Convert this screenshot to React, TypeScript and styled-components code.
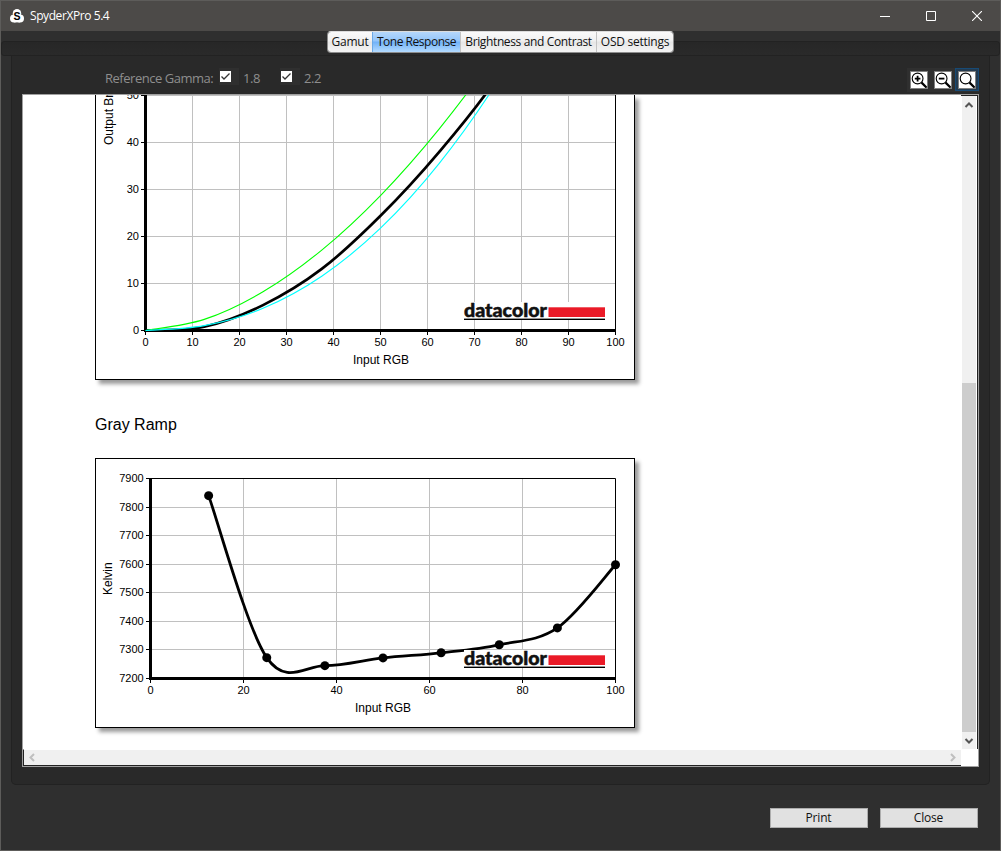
import React from 'react'
import styled, { createGlobalStyle } from 'styled-components'

const GlobalStyle = createGlobalStyle`
  * {
    box-sizing: border-box;
  }
  body {
    margin: 0;
    background: #2f2f2f;
    font-family: 'Open Sans', 'Noto Sans', sans-serif;
  }
`

const Window = styled.div`
  display: flex;
  flex-direction: column;
  width: 1001px;
  height: 851px;
  border: 1px solid #5d5c5a;
  background: #2f2f2f;
  overflow: hidden;
`

const TitleBar = styled.header`
  display: flex;
  align-items: center;
  flex: none;
  height: 30px;
  padding-left: 8px;
  background: #4c4a48;
  color: #fff;
`

const Title = styled.div`
  flex: 1;
  margin-left: 5px;
  font-size: 12px;
  line-height: 16px;
  letter-spacing: -0.42px;
`

const WindowButton = styled.div`
  display: flex;
  align-items: center;
  justify-content: center;
  width: 46px;
  height: 30px;
`

const TabStrip = styled.nav`
  display: flex;
  justify-content: center;
  flex: none;
  height: 15px;
  margin-top: 10px;
  border: 1px solid #222;
  border-radius: 3px;
  background: linear-gradient(#272727, #2a2a2a);
`

const Tabs = styled.div`
  display: flex;
  height: 22px;
  margin-top: -11px;
  border: 1px solid #8d8d8d;
  border-top-color: #dcdcdc;
  border-radius: 4px;
  overflow: hidden;
`

const Tab = styled.div<{ $width: number; $active?: boolean }>`
  flex: none;
  width: ${({ $width }) => $width}px;
  border-left: 1px solid ${({ $active }) => ($active ? '#6ba9e6' : '#c4c4c4')};
  background: ${({ $active }) =>
    $active
      ? 'linear-gradient(#b5d7fb 0%, #93c5fa 45%, #70b2f8 50%, #b4dbff 100%)'
      : 'linear-gradient(#fafafa 0%, #f0f0f0 45%, #e6e6e6 50%, #f4f4f4 100%)'};
  color: #111;
  font-size: 12px;
  line-height: 20px;
  letter-spacing: ${({ $active }) => ($active ? '-0.48px' : '-0.37px')};
  text-align: center;
  white-space: nowrap;

  &:first-child {
    border-left: 0;
    letter-spacing: -0.25px;
  }

  &:last-child {
    letter-spacing: -0.25px;
  }
`

const Panel = styled.main`
  display: flex;
  flex-direction: column;
  flex: none;
  width: 979px;
  height: 729px;
  margin-left: 10px;
  padding: 12px 10px 0;
  border: 1px solid #222;
  border-top: 0;
  border-radius: 0 0 5px 5px;
  background: #292929;
`

const Toolbar = styled.div`
  display: flex;
  height: 26px;
  padding-left: 83px;
  color: #8e8e8e;
  font-size: 13px;
  line-height: 21px;
`

const GammaLabel = styled.div`
  width: 114px;
  letter-spacing: -0.48px;
  white-space: nowrap;
`

const Check = styled.label`
  display: flex;
  width: 61px;
  letter-spacing: -0.4px;
`

const CheckArea = styled.span`
  width: 20px;
  height: 17px;
  margin-right: 4px;
  padding: 3px 0 0 1px;
  background: #2f2f2f;
`

const CheckBox = styled.svg`
  display: block;
  background: #fff;
`

const ZoomGroup = styled.div`
  display: flex;
  height: 24px;
  margin-left: auto;
  background: #2f2f2f;
`

const ZoomButton = styled.div<{ $selected?: boolean }>`
  width: 24px;
  height: 23px;
  padding: 2px;
  border: 1px solid ${({ $selected }) => ($selected ? '#174a75' : 'transparent')};
  background: ${({ $selected }) => ($selected ? '#243b50' : 'transparent')};
`

const ZoomIcon = styled.svg`
  display: block;
  border: 1px solid #808080;
  background: #fff;
`

const Viewer = styled.div`
  display: grid;
  grid-template-columns: 938px 17px;
  grid-template-rows: 654px 17px;
  width: 957px;
  height: 673px;
  border: 1px solid #a0a0a0;
  background: #fff;
`

const Page = styled.div`
  padding-left: 72px;
  overflow: hidden;
`

const Frame = styled.div<{ $cut?: boolean }>`
  width: 540px;
  border: 1px solid #000;
  border-top-width: ${({ $cut }) => ($cut ? 0 : 1)}px;
  background: #fff;
  box-shadow: 4px 4px 4px rgba(0, 0, 0, 0.4);
`

const Plot = styled.svg`
  display: block;
  font-family: 'Liberation Sans', Arial, sans-serif;
  font-size: 11px;
`

const Heading = styled.h2`
  height: 78px;
  margin: 0;
  padding-top: 35px;
  color: #000;
  font: 16px/20px 'Liberation Sans', Arial, sans-serif;
`

const VerticalBar = styled.div`
  display: flex;
  flex-direction: column;
  align-items: center;
  border-top: 1px solid #222;
  border-right: 1px solid #222;
  background: linear-gradient(90deg, #fff 1px, #f0f0f0 1px, #f0f0f0 15px, #fff 15px);
`

const VerticalThumb = styled.div`
  width: 14px;
  height: 349px;
  margin-top: 270px;
  background: #cdcdcd;
`

const HorizontalBar = styled.div`
  display: flex;
  justify-content: space-between;
  align-items: center;
  padding: 0 3px;
  border-top: 1px solid #fff;
  border-bottom: 1px solid #222;
  border-left: 1px solid #222;
  background: #f0f0f0;
`

const Footer = styled.footer`
  display: flex;
  justify-content: flex-end;
  gap: 12px;
  padding: 23px 22px 0 0;
`

const FooterButton = styled.button`
  width: 98px;
  height: 20px;
  padding: 0 1px 0 0;
  border: 1px solid #adadad;
  background: #e1e1e1;
  color: #111;
  font: 12px/18px 'Open Sans', 'Noto Sans', sans-serif;
  letter-spacing: -0.2px;
`

type Point = [number, number]

// cardinal spline through the measured points
const spline = (pts: Point[]) => {
  let d = `M${pts[0][0]} ${pts[0][1]}`
  for (let i = 0; i < pts.length - 1; i++) {
    const a = pts[Math.max(i - 1, 0)]
    const b = pts[i]
    const c = pts[i + 1]
    const e = pts[Math.min(i + 2, pts.length - 1)]
    d += `C${b[0] + (c[0] - a[0]) / 6} ${b[1] + (c[1] - a[1]) / 6} ${c[0] - (e[0] - b[0]) / 6} ${
      c[1] - (e[1] - b[1]) / 6
    } ${c[0]} ${c[1]}`
  }
  return d
}

const STEPS = [0, 12.5, 25, 37.5, 50, 62.5, 75, 87.5, 100]
const MEASURED = [0, 0.8, 5.4, 13.1, 24.4, 38, 54, 75, 100]
const KELVIN = [7840, 7273, 7245, 7272, 7290, 7318, 7377, 7598]

const toneCurve = (values: number[]) =>
  spline(values.map((v, i) => [50.5 + STEPS[i] * 4.7, 235.5 - v * 4.7] as Point))
const gammaCurve = (gamma: number) => toneCurve(STEPS.map((s) => 100 * (s / 100) ** gamma))
const kelvinLine = (n: number) => Math.floor(220.5 - (n * 200) / 7) + 0.5

const Logo: React.FC<{ x: number; y: number }> = ({ x, y }) => (
  <g transform={`translate(${x} ${y})`}>
    <rect width="141" height="18" fill="#fff" />
    <text
      x="0"
      y="15"
      fontFamily="Lato, sans-serif"
      fontWeight="900"
      fontSize="18.5"
      textLength="83"
      lengthAdjust="spacingAndGlyphs"
      fill="#111"
      stroke="#111"
      strokeWidth="0.5"
    >
      datacolor
    </text>
    <rect x="84.5" y="5.3" width="56.5" height="9.7" fill="#ea1a27" />
    <rect y="16.6" width="141" height="1.4" fill="#000" />
  </g>
)

const ToneChart: React.FC = () => {
  const tens = [0, 1, 2, 3, 4, 5, 6, 7, 8, 9, 10]
  return (
    <Plot width="538" height="284" viewBox="1 0 538 284">
      <g stroke="#c0c0c0">
        {tens.slice(1, 10).map((n) => (
          <path key={n} d={`M${50.5 + n * 47} 0V235`} />
        ))}
        {tens.slice(1, 6).map((n) => (
          <path key={n} d={`M51 ${235.5 - n * 47}H520`} />
        ))}
      </g>
      <path d="M520.5 0V240" stroke="#000" />
      <path d="M50.5 0V237M49 235.5H521" stroke="#000" strokeWidth="3" />
      {tens.map((n) => (
        <g key={n}>
          <path d={`M${50.5 + n * 47} 236V240M46 ${235.5 - n * 47}H50`} stroke="#000" />
          <text x={50.5 + n * 47} y="251" textAnchor="middle">
            {n * 10}
          </text>
          {n < 6 && (
            <text x="44" y={239 - n * 47} textAnchor="end">
              {n * 10}
            </text>
          )}
        </g>
      ))}
      <g fill="none">
        <path d={toneCurve(MEASURED)} stroke="#000" strokeWidth="2.7" />
        <path d={gammaCurve(1.8)} stroke="#00ff00" strokeWidth="1.1" />
        <path d={gammaCurve(2.2)} stroke="#00ffff" strokeWidth="1.1" />
      </g>
      <Logo x={369} y={207} />
      <text x="286" y="269" fontSize="12" textAnchor="middle" textLength="56">
        Input RGB
      </text>
      <text transform="translate(18 50) rotate(-90)" fontSize="12">
        Output Brightness
      </text>
    </Plot>
  )
}

const RampChart: React.FC = () => {
  const points = KELVIN.map((k, i) => [55.5 + (i + 1) * 58.125, 220.5 - (k - 7200) / 3.5] as Point)
  return (
    <Plot width="538" height="268" viewBox="1 1 538 268">
      <g stroke="#c0c0c0">
        {[1, 2, 3, 4].map((n) => (
          <path key={n} d={`M${55.5 + n * 93} 21V220`} />
        ))}
        {[1, 2, 3, 4, 5, 6].map((n) => (
          <path key={n} d={`M56 ${kelvinLine(n)}H520`} />
        ))}
      </g>
      <path d="M55 20.5H520.5V225" fill="none" stroke="#000" />
      <path d="M55.5 20V222M54 220.5H521" stroke="#000" strokeWidth="3" />
      {[0, 1, 2, 3, 4, 5, 6, 7].map((n) => (
        <g key={n}>
          <path d={`M51 ${kelvinLine(n)}H55`} stroke="#000" />
          <text x="48.7" y={kelvinLine(n) + 3.5} textAnchor="end">
            {7200 + n * 100}
          </text>
        </g>
      ))}
      {[0, 1, 2, 3, 4, 5].map((n) => (
        <g key={n}>
          <path d={`M${55.5 + n * 93} 221V225`} stroke="#000" />
          <text x={55.5 + n * 93} y="236" textAnchor="middle">
            {n * 20}
          </text>
        </g>
      ))}
      <path d={spline(points)} fill="none" stroke="#000" strokeWidth="2.8" />
      {points.map(([x, y]) => (
        <circle key={x} cx={x} cy={y} r="4.5" />
      ))}
      <Logo x={369} y={192} />
      <text x="288" y="254" fontSize="12" textAnchor="middle" textLength="56">
        Input RGB
      </text>
      <text transform="translate(17 137) rotate(-90)" fontSize="12">
        Kelvin
      </text>
    </Plot>
  )
}

const Magnifier: React.FC<{ sign?: string }> = ({ sign }) => (
  <ZoomIcon width="18" height="18" viewBox="1 1 16 16" fill="none" stroke="#000">
    <circle cx="7.6" cy="7.5" r="5.4" strokeWidth="1.1" />
    <path d="M11.6 11.6L16.6 16.6" strokeWidth="2.2" />
    {sign && <path d={sign} strokeWidth="1.8" />}
  </ZoomIcon>
)

const Arrow: React.FC<{ d: string; color: string }> = ({ d, color }) => (
  <svg width="10" height="17" viewBox="0 0 10 17" fill="none" stroke={color} strokeWidth="2">
    <path d={d} />
  </svg>
)

const GammaCheck: React.FC<{ label: string }> = ({ label }) => (
  <Check>
    <CheckArea>
      <CheckBox width="11" height="11" viewBox="0 0 11 11">
        <path d="M1.5 5.5L4 8L9.5 2.5" fill="none" stroke="#333" strokeWidth="1.3" />
      </CheckBox>
    </CheckArea>
    {label}
  </Check>
)

const App: React.FC = () => (
  <>
    <GlobalStyle />
    <Window>
      <TitleBar>
        <svg width="16" height="16" viewBox="0 0 16 16">
          <g fill="#fff">
            <circle cx="8" cy="5.2" r="4.2" />
            <circle cx="5" cy="10.4" r="4" />
            <circle cx="11" cy="10.4" r="4" />
            <rect x="5" y="8" width="6" height="6.4" />
          </g>
          <text x="8" y="11.5" fontFamily="Liberation Sans" fontWeight="700" fontSize="10.5" textAnchor="middle">
            S
          </text>
        </svg>
        <Title>SpyderXPro 5.4</Title>
        <WindowButton>
          <svg width="12" height="10" stroke="#fff">
            <path d="M1 5.5H11" />
          </svg>
        </WindowButton>
        <WindowButton>
          <svg width="10" height="10" fill="none" stroke="#fff">
            <path d="M0.5 0.5H9.5V9.5H0.5Z" />
          </svg>
        </WindowButton>
        <WindowButton>
          <svg width="10" height="10" stroke="#fff" strokeWidth="1.1">
            <path d="M0 0L10 10M10 0L0 10" />
          </svg>
        </WindowButton>
      </TitleBar>
      <TabStrip>
        <Tabs>
          <Tab $width={44}>Gamut</Tab>
          <Tab $width={88} $active>
            Tone Response
          </Tab>
          <Tab $width={136}>Brightness and Contrast</Tab>
          <Tab $width={77}>OSD settings</Tab>
        </Tabs>
      </TabStrip>
      <Panel>
        <Toolbar>
          <GammaLabel>Reference Gamma:</GammaLabel>
          <GammaCheck label="1.8" />
          <GammaCheck label="2.2" />
          <ZoomGroup>
            <ZoomButton>
              <Magnifier sign="M4.8 7.6H10.4M7.6 4.8V10.4" />
            </ZoomButton>
            <ZoomButton>
              <Magnifier sign="M4.8 7.6H10.4" />
            </ZoomButton>
            <ZoomButton $selected>
              <Magnifier />
            </ZoomButton>
          </ZoomGroup>
        </Toolbar>
        <Viewer>
          <Page>
            <Frame $cut>
              <ToneChart />
            </Frame>
            <Heading>Gray Ramp</Heading>
            <Frame>
              <RampChart />
            </Frame>
          </Page>
          <VerticalBar>
            <Arrow d="M1.5 11L5 7.5L8.5 11" color="#555" />
            <VerticalThumb />
            <Arrow d="M1.5 7L5 10.5L8.5 7" color="#555" />
          </VerticalBar>
          <HorizontalBar>
            <Arrow d="M7 5L3.5 8.5L7 12" color="#bfbfbf" />
            <Arrow d="M3 5L6.5 8.5L3 12" color="#bfbfbf" />
          </HorizontalBar>
        </Viewer>
      </Panel>
      <Footer>
        <FooterButton>Print</FooterButton>
        <FooterButton>Close</FooterButton>
      </Footer>
    </Window>
  </>
)

export default App
